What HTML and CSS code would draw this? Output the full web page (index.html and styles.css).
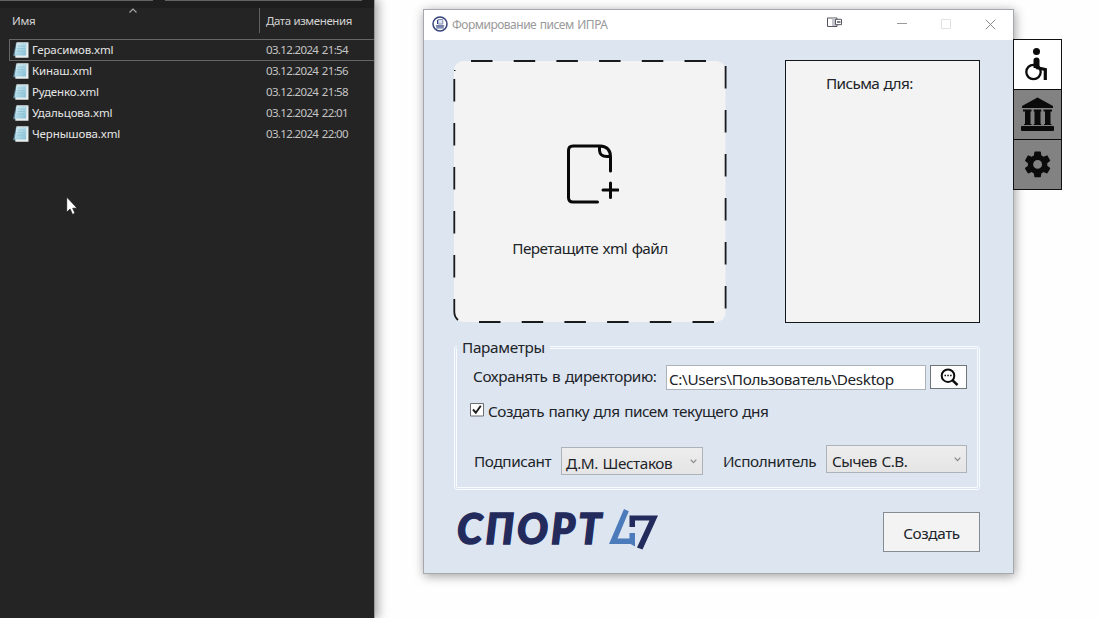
FILE: index.html
```html
<!DOCTYPE html>
<html lang="ru">
<head>
<meta charset="utf-8">
<title>Формирование писем ИПРА</title>
<link rel="stylesheet" href="styles.css">
</head>
<body>
<svg width="0" height="0" class="defs">
  <defs>
    <linearGradient id="pad" x1="0" y1="0" x2="1" y2="1"><stop offset="0" stop-color="#d9f1f8"/><stop offset="1" stop-color="#83bfd4"/></linearGradient>
    <symbol id="note" viewBox="0 0 16 16">
      <path d="M3 1 L0 14 L4 15Z" fill="#54788a"/>
      <path d="M3.500 .3H15.500V15.700H2.300Z" fill="#e9eeee"/>
      <path d="M3.600 1.200H13.500L13 13.600H1.500Z" fill="url(#pad)"/>
      <path d="M4 .8H15" stroke="#9fb4bc" stroke-dasharray="1 1"/>
      <path d="M4.500 4H12M4.300 6.500H12M4 9H11.500" stroke="#79b2c7" stroke-width=".5"/>
    </symbol>
  </defs>
</svg>
<div class="desktop">
  <section class="explorer">
    <div class="strip"><i class="s1"></i><i class="s2"></i></div>
    <div class="head">
      <span class="col-name"><span class="t-name">Имя</span>
        <svg class="sort" width="10" height="6" viewBox="0 0 10 6"><path d="M1.500 4.500L5 1L8.500 4.500" fill="none" stroke="#aaa" stroke-width="1.100"/></svg>
      </span>
      <span class="col-date">Дата изменения</span>
    </div>
    <div class="files">
      <div class="file selected"><svg class="ic"><use href="#note"/></svg><span class="name">Герасимов.xml</span><span class="date">03.12.2024 21:54</span></div>
      <div class="file"><svg class="ic"><use href="#note"/></svg><span class="name">Кинаш.xml</span><span class="date">03.12.2024 21:56</span></div>
      <div class="file"><svg class="ic"><use href="#note"/></svg><span class="name">Руденко.xml</span><span class="date">03.12.2024 21:58</span></div>
      <div class="file"><svg class="ic"><use href="#note"/></svg><span class="name">Удальцова.xml</span><span class="date">03.12.2024 22:01</span></div>
      <div class="file"><svg class="ic"><use href="#note"/></svg><span class="name">Чернышова.xml</span><span class="date">03.12.2024 22:00</span></div>
    </div>
    <svg class="cursor" width="12" height="20" viewBox="0 0 12 20"><path d="M.7 1V16.300L4.100 13.100L6.500 18.400L9 17.300L6.700 12.200H11.200Z" fill="#fff" stroke="#111" stroke-width=".7"/></svg>
  </section>

  <main class="window">
    <header class="titlebar">
      <svg class="app" width="16" height="16" viewBox="0 0 16 16"><circle cx="8" cy="8" r="7" fill="#fff" stroke="#35427c" stroke-width="1.500"/><path d="M6 3.500H10.800V8H6Z" fill="#dfe4f1" stroke="#7482ad" stroke-width=".9"/><path d="M5.500 4V8" stroke="#35427c"/><path d="M3.500 9H12.500L11.300 11.500H4.700Z" fill="#7482ad"/><path d="M4 12H12" stroke="#35427c" stroke-width=".8"/></svg>
      <span class="caption">Формирование писем ИПРА</span>
      <svg class="snap" width="16" height="11" viewBox="0 0 16 11"><path d="M.5 1H10V9.500H.5Z" fill="#fff" stroke="#555560"/><path d="M5 1.500H9V9H5Z" fill="#c4c4cd"/><path d="M8.500 2.300H14.500V7.700H8.500Z" fill="#fff" stroke="#555560"/><path d="M10 5H13.500" stroke="#555560" stroke-width="1.500"/></svg>
      <svg class="min" width="10" height="12" viewBox="0 0 10 12"><path d="M0 5.500H10" stroke="#999"/></svg>
      <svg class="max" width="10" height="10" viewBox="0 0 10 10"><path d="M.5 .5H9.500V9.500H.5Z" fill="none" stroke="#e2e2e2"/></svg>
      <svg class="close" width="11" height="11" viewBox="0 0 11 11"><path d="M.7 .7L10.300 10.300M10.300 .7L.7 10.300" stroke="#8c8c8c"/></svg>
    </header>
    <div class="body">
      <div class="top">
        <div class="drop">
          <svg class="dash" width="274" height="263" viewBox="0 0 274 263">
            <rect x="1" y="1" width="271.500" height="261" rx="9" fill="#f3f3f3"/>
            <g fill="none" stroke="#181a1c" stroke-width="1.800">
              <path d="M18 1H273" stroke-dasharray="21.500 21.200" />
              <path d="M272.600 6V253" stroke-dasharray="22.500 21.500"/>
              <path d="M1.300 19V236" stroke-dasharray="22.500 21.500"/>
              <path d="M1.300 239V252Q1.500 257 5 260"/>
              <path d="M26 262H262" stroke-dasharray="21.500 21.200"/>
              <path d="M1 10.500H2.500" stroke-width="1"/>
            </g>
          </svg>
          <svg class="doc" width="52" height="60" viewBox="0 0 52 60"><path d="M30.500 58H6Q1.500 58 1.500 53.500V6.500Q1.500 2 6 2H33Q43.500 2.500 43.500 13V27M32.500 2V6.500Q33 12.500 40 12.500H43.500M43.500 39V53.500M36 46H51" fill="none" stroke="#080808" stroke-width="3" stroke-linecap="round" stroke-linejoin="round"/></svg>
          <span class="droptext">Перетащите xml файл</span>
        </div>
        <div class="letters"><span class="for">Письма для:</span></div>
      </div>
      <div class="params">
        <span class="legend">Параметры</span>
        <div class="row r1">
          <span class="l1">Сохранять в директорию:</span>
          <div class="path"><span class="pt">C:\Users\Пользователь\Desktop</span></div>
          <div class="browse"><svg width="19" height="19" viewBox="0 0 19 19"><circle cx="8" cy="7.700" r="6.300" fill="none" stroke="#0d0d0d" stroke-width="2"/><path d="M12.600 12.300L17.500 17" stroke="#0d0d0d" stroke-width="2.500"/><path d="M4.500 7.500H6M7.300 7.500H8.800M10.100 7.500H11.600" stroke="#0d0d0d" stroke-width="1.600"/></svg></div>
        </div>
        <div class="row r2">
          <svg class="check" width="14" height="14" viewBox="0 0 14 14"><path d="M.5 .5H13.500V13H.5Z" fill="#fdfdfd" stroke="#6c6f73"/><path d="M3 6.500L5.800 9.700L10.800 2.800" fill="none" stroke="#1d1d1d" stroke-width="1.900"/></svg>
          <span class="l2">Создать папку для писем текущего дня</span>
        </div>
        <div class="row r3">
          <span class="l3">Подписант</span>
          <div class="select a"><span class="v1">Д.М. Шестаков</span><svg width="7" height="5" viewBox="0 0 7 5"><path d="M.7 .7L3.500 3.600L6.300 .7" fill="none" stroke="#888" stroke-width="1.200"/></svg></div>
          <span class="l4">Исполнитель</span>
          <div class="select b"><span class="v2">Сычев С.В.</span><svg width="7" height="5" viewBox="0 0 7 5"><path d="M.7 .7L3.500 3.600L6.300 .7" fill="none" stroke="#888" stroke-width="1.200"/></svg></div>
        </div>
      </div>
      <div class="foot">
        <div class="logo"><span class="sport">СПОРТ</span>
          <svg class="mark" width="50" height="42" viewBox="0 0 50 42"><path d="M15 0L19.800 2.200L8.500 29.500H20.500V24H26V37.500L21.500 35H0Z" fill="#4c7bbb"/><path d="M20.500 6.500H49L33.500 40.500L28 38.500L40.500 11.500H26V18H20.500Z" fill="#232a5c"/></svg>
        </div>
        <div class="create"><span class="ct">Создать</span></div>
      </div>
    </div>
  </main>

  <nav class="tabs">
    <div class="tab active"><svg width="48" height="48" viewBox="0 0 48 48"><circle cx="22.500" cy="11.500" r="3.500"/><path d="M19.500 20.500Q19.500 17.500 22.500 17.500Q25.500 17.500 25.500 20.500V28H19.500Z"/><circle cx="19.500" cy="32" r="7.200" fill="none" stroke="#0b0b0b" stroke-width="2.300"/><path d="M22 27.500L31.300 29.500V40" fill="none" stroke="#0b0b0b" stroke-width="3.200"/></svg></div>
    <div class="tab"><svg width="48" height="49" viewBox="0 0 48 49"><path d="M23.500 7.500L39 16V18H8V16ZM9 19.500H17.500V21.500H16.500V34H17.500V35H10V34H11V21.500H9ZM19.700 19.500H27.300V21.500H26.500V34H27.300V35H19.700V34H20.500V21.500H19.700ZM29.500 19.500H38V21.500H36.500V34H37.500V35H30V34H31V21.500H29.500Z"/><rect x="7" y="36" width="33" height="5" rx="1"/></svg></div>
    <div class="tab"><svg width="48" height="49" viewBox="0 0 48 49"><g transform="translate(7.400 8.200) scale(1.350)"><path d="M19.140 12.940c.04-.3.060-.61.060-.94 0-.32-.02-.64-.07-.94l2.030-1.580c.18-.14.230-.41.120-.61l-1.920-3.320c-.12-.22-.37-.29-.59-.22l-2.390.96c-.5-.38-1.030-.7-1.620-.94L14.400 2.810c-.04-.24-.24-.41-.48-.41h-3.840c-.24 0-.43.170-.47.410L9.250 5.350C8.660 5.590 8.120 5.920 7.630 6.290L5.240 5.330c-.22-.08-.47 0-.59.220L2.740 8.870c-.12.210-.08.470.12.610l2.030 1.580C4.840 11.360 4.800 11.690 4.800 12s.02.640.07.940l-2.030 1.580c-.18.140-.23.410-.12.610l1.920 3.320c.12.220.37.290.59.220l2.390-.96c.5.380 1.030.7 1.620.94l.36 2.540c.05.240.24.410.48.410h3.840c.24 0 .44-.17.470-.41l.36-2.540c.59-.24 1.130-.56 1.620-.94l2.390.96c.22.080.47 0 .59-.22l1.920-3.320c.12-.22.070-.47-.12-.61L19.140 12.940zM12 15.300A3.300 3.300 0 1 1 12 8.700A3.300 3.300 0 0 1 12 15.300z"/></g></svg></div>
  </nav>
</div>
</body>
</html>
```
FILE: styles.css
```css
* { box-sizing: border-box; }
body { margin: 0; width: 1100px; height: 618px; overflow: hidden; background: #fefefe; font-family: "Noto Sans", "Open Sans", sans-serif; color: #202328; }
svg { display: block; flex: none; }
span { white-space: nowrap; }
.defs { position: absolute; }
.desktop { display: flex; align-items: flex-start; height: 618px; }

.explorer { position: relative; flex: none; width: 374px; height: 618px; background: #242424; color: #e6e6e6; font-size: 11.5px; box-shadow: 1px 0 0 #999, 3px 0 10px 1px rgba(0,0,0,.36); }
.strip { display: flex; gap: 12px; height: 8px; background: #1e1e1e; }
.strip i { height: 1px; background: #626262; }
.s1 { width: 153px; }
.s2 { width: 197px; }
.head { display: flex; height: 25px; color: #d2d2d2; line-height: 25px; }
.col-name { position: relative; width: 260px; padding-left: 12px; border-right: 1px solid #606060; letter-spacing: -.3px; }
.sort { position: absolute; left: 128px; top: 0; }
.col-date { padding-left: 6px; letter-spacing: -.4px; }
.files { padding: 6px 0 0 9px; }
.file { display: flex; align-items: center; height: 21px; padding-left: 4px; border: 0 solid #666; line-height: 17px; }
.file.selected { height: 22px; border-width: 1px 0 1px 1px; padding-left: 3px; }
.file:not(.selected) { padding-bottom: 2px; }
.file.selected .name, .file.selected .date { margin-top: -1px; }
.ic { width: 16px; height: 16px; }
.name { width: 234px; padding-left: 3px; letter-spacing: -.12px; }
.date { color: #c4c4c4; padding-left: 3px; letter-spacing: -.65px; word-spacing: 1.2px; }
.cursor { position: absolute; left: 66px; top: 196px; }

.window { flex: none; width: 591px; height: 565px; margin: 9px 0 0 49px; border: 1px solid #a5a8ac; background: #dde5f0; box-shadow: 1px 2px 10px rgba(0,0,0,.38); }
.titlebar { display: flex; align-items: center; height: 30px; padding: 0 17px 2px 8px; background: #fff; }
.caption { margin-left: 4px; width: 157px; font-size: 12px; letter-spacing: -.5px; word-spacing: 1px; color: #999; }
.snap { margin-left: 218px; margin-top: -3px; }
.min { margin-left: 54px; }
.max { margin-left: 34px; }
.close { margin-left: auto; }
.body { padding: 20px 33px 0 29px; font-size: 15.3px; word-spacing: 1px; }
.top { display: flex; justify-content: space-between; }
.drop { position: relative; width: 274px; height: 263px; display: flex; flex-direction: column; align-items: center; padding-top: 84px; }
.dash { position: absolute; inset: 0; }
.doc { position: relative; margin-left: 6px; }
.droptext { position: relative; margin-top: 32px; line-height: 24px; letter-spacing: -.56px; }
.letters { width: 195px; height: 263px; border: 1px solid #14171a; background: #f3f3f3; padding: 11px 0 0 40px; line-height: 22px; letter-spacing: -.61px; }
.params { position: relative; width: 526px; height: 144px; margin: 23px 0 0 1px; border: 3px double #f8fcff; border-radius: 3px; padding: 16px 0 0 13px; }
.legend { position: absolute; left: 0; top: -13px; padding: 0 5px; line-height: 22px; background: #dde5f0; letter-spacing: -.3px; }
.row { display: flex; }
.r1 { height: 38px; }
.l1 { width: 196px; padding-left: 3px; line-height: 22px; letter-spacing: -.38px; }
.path { width: 260px; height: 25px; border: 1px solid #adb1b8; background: #fff; padding-left: 2px; line-height: 26px; letter-spacing: -.35px; }
.browse { width: 37px; height: 24px; margin-left: 4px; border: 1px solid #70757a; background: #fdfdfd; padding: 2px 0 0 9px; }
.r2 { height: 41px; }
.l2 { margin-left: 4px; line-height: 17px; letter-spacing: -.48px; }
.r3 { line-height: 34px; }
.l3 { width: 91px; padding-left: 4px; letter-spacing: -.38px; }
.l4 { width: 103px; margin-left: 20px; letter-spacing: -.45px; }
.select { display: flex; justify-content: space-between; height: 28px; border: 1px solid #adb1b8; background: linear-gradient(#ededee, #e5e5e6); padding: 0 5px; line-height: 30px; letter-spacing: -.42px; }
.select svg { margin-top: 11px; }
.a { width: 142px; margin-top: 3px; padding-left: 4px; }
.b { width: 141px; margin-top: 1px; letter-spacing: -.5px; }
.foot { display: flex; justify-content: space-between; margin-top: 19px; padding-left: 4px; }
.logo { display: flex; }
.sport { width: 152px; font: italic 900 41px/40px Lato, sans-serif; letter-spacing: 3px; -webkit-text-stroke: 1.4px #232a5c; color: #232a5c; }
.create { width: 97px; height: 40px; margin-top: 3px; border: 1px solid #858b92; background: #f3f3f3; text-align: center; line-height: 41px; letter-spacing: -.4px; }

.tabs { position: relative; flex: none; width: 49px; margin: 39px 0 0 -1px; border: 1px solid #111; }
.tab { height: 50px; background: #828282; border-top: 1px solid #0b0b0b; fill: #0b0b0b; }
.tab:first-child { height: 49px; border-top: 0; }
.active { background: #fff; }
```
